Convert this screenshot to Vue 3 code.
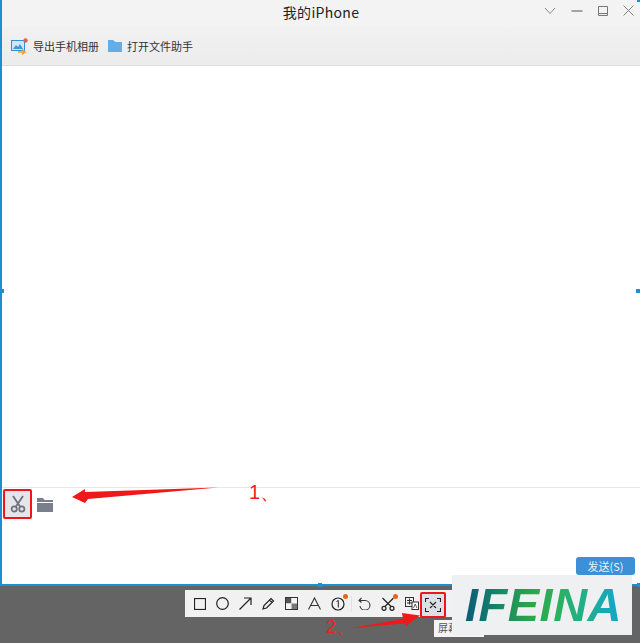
<template>
  <div class="page">
    <div class="window">
      <div class="titlebar">
        <span class="title">我的iPhone</span>
        <div class="win-btns">
          <svg width="12" height="8" viewBox="0 0 12 8"><path d="M1 1l5 5.500 5-5.500" fill="none" stroke="#8a8a8a" /></svg>
          <svg width="12" height="8" viewBox="0 0 12 8"><path d="M0.500 4h11" fill="none" stroke="#707070" stroke-width="1.200" /></svg>
          <svg width="10" height="10" viewBox="0 0 10 10"><path d="M.500.500h9v9h-9zM.500 7.500h9" fill="none" stroke="#777" /></svg>
          <svg width="11" height="11" viewBox="0 0 11 11"><path d="M.500.500l10 10M10.500.500l-10 10" fill="none" stroke="#808080" /></svg>
        </div>
      </div>
      <div class="toolbar">
        <div class="tool-item">
          <svg width="17" height="17" viewBox="0 0 17 17">
            <rect x="0.500" y="2.500" width="13" height="10" fill="#cfe6f8" stroke="#2f8fdc" />
            <path d="M2 11l3-4 2 2 2-3 3 5z" fill="#3f97dc" />
            <path d="M7 14h6M11 11.500l3 2.500-3 2.500" fill="none" stroke="#ef9d2c" stroke-width="1.500" />
            <circle cx="14.500" cy="2.500" r="2.200" fill="#d9625a" />
          </svg>
          <span>导出手机相册</span>
        </div>
        <div class="tool-item">
          <svg width="14" height="12" viewBox="0 0 14 12"><path d="M0 0h5l2.500 2H14v10H0z" fill="#63ade9" /></svg>
          <span>打开文件助手</span>
        </div>
      </div>
      <div class="chat"></div>
      <div class="input-area">
        <div class="input-tools">
          <div class="cut-btn">
            <svg width="16" height="18" viewBox="0 0 16 18">
              <path d="M3 1l7 10.500M13 1L6 11.500" fill="none" stroke="#6f7480" stroke-width="1.900" />
              <circle cx="4.200" cy="14" r="2.600" fill="none" stroke="#6f7480" stroke-width="1.800" />
              <circle cx="11.800" cy="14" r="2.600" fill="none" stroke="#6f7480" stroke-width="1.800" />
            </svg>
          </div>
          <svg class="folder" width="16" height="14" viewBox="0 0 16 14"><path d="M0 0h6l1.500 2H16v2H0zM0 5h16v9H0z" fill="#7a7f8c" /></svg>
        </div>
        <div class="send-row"><button class="send">发送(S)</button></div>
      </div>
      <i class="handle handle-l"></i>
      <i class="handle handle-r"></i>
      <i class="handle handle-b"></i>
      <i class="handle handle-tr"></i>
      <i class="handle handle-br"></i>
    </div>

    <div class="bottom">
      <div class="shot-bar">
        <svg width="12" height="12" viewBox="0 0 12 12"><rect x=".5" y=".5" width="11" height="11" fill="none" stroke="#222" stroke-width="1.200" /></svg>
        <svg width="13" height="13" viewBox="0 0 13 13"><circle cx="6.500" cy="6.500" r="5.800" fill="none" stroke="#222" stroke-width="1.200" /></svg>
        <svg width="13" height="13" viewBox="0 0 13 13"><path d="M.500 12.500L12 1M5 1h7v7" fill="none" stroke="#222" stroke-width="1.200" /></svg>
        <svg width="13" height="13" viewBox="0 0 13 13"><path d="M1 12l1-3.500L9 1.500l2.500 2.500-7 7zM7.500 3l2.500 2.500" fill="none" stroke="#222" stroke-width="1.200" /></svg>
        <svg width="13" height="13" viewBox="0 0 13 13"><rect x=".5" y=".5" width="12" height="12" fill="#fff" stroke="#333" /><path d="M1 1h5.500v5.500H1z" fill="#555" /><path d="M6.500 1H12v5.500H6.500zM1 6.500h5.500V12H1z" fill="#f4f4f4" /><path d="M6.500 6.500H12V12H6.500z" fill="#777" /></svg>
        <svg width="13" height="13" viewBox="0 0 13 13"><path d="M.500 12.500L6.500 1l6 11.500M2.800 8.500h7.400" fill="none" stroke="#333" stroke-width="1.100" /></svg>
        <div class="num">
          <svg width="14" height="14" viewBox="0 0 14 14"><circle cx="7" cy="7" r="6" fill="none" stroke="#222" stroke-width="1.200" /><path d="M5.500 4.500L7.300 3.500v7" fill="none" stroke="#222" /></svg>
          <i class="dot"></i>
        </div>
        <span class="sep"></span>
        <svg width="13" height="13" viewBox="0 0 13 13"><path d="M3.500 1L1 3.500l2.500 2M1.500 3.500h5.500a5 4.800 0 1 1-5 5.500" fill="none" stroke="#333" stroke-width="1.100" /></svg>
        <div class="num">
          <svg width="14" height="14" viewBox="0 0 14 14"><path d="M1.500 1l8.500 8.500M12.500 1L4 9.500" fill="none" stroke="#222" stroke-width="1.200" /><circle cx="3" cy="11.300" r="2" fill="none" stroke="#222" stroke-width="1.200" /><circle cx="11" cy="11.300" r="2" fill="none" stroke="#222" stroke-width="1.200" /></svg>
          <i class="dot"></i>
        </div>
        <svg width="14" height="13" viewBox="0 0 14 13"><rect x=".5" y=".5" width="8" height="9" fill="none" stroke="#333" /><path d="M2 3.500h5M2 6h5M4.500 1.500v6" stroke="#333" fill="none" /><rect x="7" y="5" width="6.500" height="7.500" fill="#fff" stroke="#333" /><path d="M8.500 11l1.700-4 1.700 4" fill="none" stroke="#333" stroke-width=".8" /></svg>
        <div class="scan">
          <svg width="16" height="14" viewBox="0 0 16 14"><path d="M.500 4V.500H4M12 .500h3.500V4M15.500 10v3.500H12M4 13.500H.500V10M5 4l6 6M11 4l-6 6" fill="none" stroke="#222" stroke-width="1.100" /></svg>
        </div>
      </div>
    </div>

    <svg class="arrows" width="640" height="643" viewBox="0 0 640 643">
      <path d="M72 497L85 489 85 492 218 487.500 88 499 85 503z" fill="#f01818" />
      <path d="M351 628L403 619 402 613 420 615.500 406 626 404.500 623.500z" fill="#f01818" />
    </svg>
    <span class="mark mark-1">1、</span>
    <span class="mark mark-2">2、</span>
    <div class="tip">屏幕</div>
    <div class="logo"><span>IFEINA</span></div>
  </div>
</template>

<script setup>
</script>

<style>
html, body { margin: 0; padding: 0; }
</style>

<style scoped>
.page {
  position: relative;
  width: 640px;
  height: 643px;
  overflow: hidden;
  background: #646464;
  font-family: "Noto Sans CJK SC", "Noto Sans", sans-serif;
  color: #333;
}
.window {
  position: relative;
  height: 586px;
  box-sizing: border-box;
  display: flex;
  flex-direction: column;
  background: #fff;
  border-left: 2px solid #1c8fd0;
  border-bottom: 2px solid #1c8fd0;
}
.titlebar {
  height: 27px;
  flex-shrink: 0;
  display: flex;
  align-items: center;
  justify-content: center;
  background: #f3f3f3;
  position: relative;
}
.title {
  font-size: 14px;
  letter-spacing: 0.3px;
  color: #222;
  margin-top: -3px;
}
.win-btns {
  position: absolute;
  right: 6px;
  top: 4px;
  height: 13px;
  display: flex;
  align-items: center;
  gap: 15px;
}
.toolbar {
  height: 39px;
  flex-shrink: 0;
  box-sizing: border-box;
  display: flex;
  align-items: center;
  padding-left: 9px;
  gap: 9px;
  background: linear-gradient(#f1f1f1, #ececec);
  border-bottom: 1px solid #dedede;
}
.tool-item {
  display: flex;
  align-items: center;
  gap: 5px;
  font-size: 11px;
  color: #333;
}
.chat { flex: 1; }
.input-area {
  height: 97px;
  flex-shrink: 0;
  box-sizing: border-box;
  border-top: 1px solid #e8e8e8;
  display: flex;
  flex-direction: column;
  justify-content: space-between;
}
.input-tools {
  display: flex;
  align-items: center;
  gap: 5px;
  padding: 1px 0 0 1px;
}
.cut-btn {
  width: 25px;
  height: 26px;
  display: flex;
  align-items: center;
  justify-content: center;
  background: #e6e6ea;
  border: 2px solid #f0141c;
  border-radius: 2px;
}
.folder { margin-top: 1px; }
.send-row {
  display: flex;
  justify-content: flex-end;
  padding: 0 5px 9px 0;
}
.send {
  width: 59px;
  height: 18px;
  padding: 0;
  border: 0;
  border-radius: 3px;
  background: #3d90d8;
  color: #e8f2fb;
  font-family: inherit;
  font-size: 11px;
  line-height: 18px;
}
.handle {
  position: absolute;
  width: 4px;
  height: 4px;
  background: #1c8fd0;
}
.handle-l { left: -2px; top: 289px; }
.handle-r { right: 0; top: 289px; }
.handle-b { left: 316px; bottom: -3px; }
.handle-tr { right: -1px; top: -2px; }
.handle-br { right: -1px; bottom: -3px; }
.bottom {
  padding: 4px 0 0 185px;
}
.shot-bar {
  width: 290px;
  height: 27px;
  box-sizing: border-box;
  display: flex;
  align-items: center;
  gap: 10px;
  padding-left: 9px;
  background: #f1f1f1;
}
.num {
  position: relative;
  display: flex;
}
.dot {
  position: absolute;
  right: -3px;
  top: -3px;
  width: 5px;
  height: 5px;
  border-radius: 50%;
  background: #e8641e;
}
.sep {
  width: 1px;
  height: 16px;
  background: #e2e2e2;
  margin: 0 -4px;
}
.scan {
  width: 26px;
  height: 26px;
  margin: 2px 0 0 -9px;
  box-sizing: border-box;
  display: flex;
  align-items: center;
  justify-content: center;
  background: #dcdfe4;
  border: 2px solid #f0141c;
  border-radius: 2px;
}
.arrows {
  position: absolute;
  left: 0;
  top: 0;
  pointer-events: none;
}
.mark {
  position: absolute;
  color: #f0201f;
  font-family: "Liberation Sans", sans-serif;
  line-height: 20px;
}
.mark-1 { left: 249px; top: 482px; font-size: 20px; }
.mark-2 { left: 326px; top: 617px; font-size: 18px; }
.tip {
  position: absolute;
  left: 434px;
  top: 620px;
  width: 50px;
  height: 17px;
  box-sizing: border-box;
  padding-left: 4px;
  background: #f4f4f4;
  font-size: 10px;
  line-height: 16px;
  color: #555;
}
.logo {
  position: absolute;
  left: 452px;
  top: 575px;
  width: 180px;
  height: 60px;
  box-sizing: border-box;
  padding-left: 3px;
  display: flex;
  align-items: center;
  justify-content: center;
  background: #eff0f2;
}
.logo span {
  font-family: "Liberation Sans", sans-serif;
  font-size: 47px;
  font-weight: 700;
  font-style: italic;
  letter-spacing: 0.5px;
  line-height: 60px;
  background: linear-gradient(90deg, #0b5a78 0%, #15806a 18%, #2aa64a 42%, #2cb05a 58%, #20b088 75%, #12a5cf 100%);
  -webkit-background-clip: text;
  background-clip: text;
  color: transparent;
}
</style>
